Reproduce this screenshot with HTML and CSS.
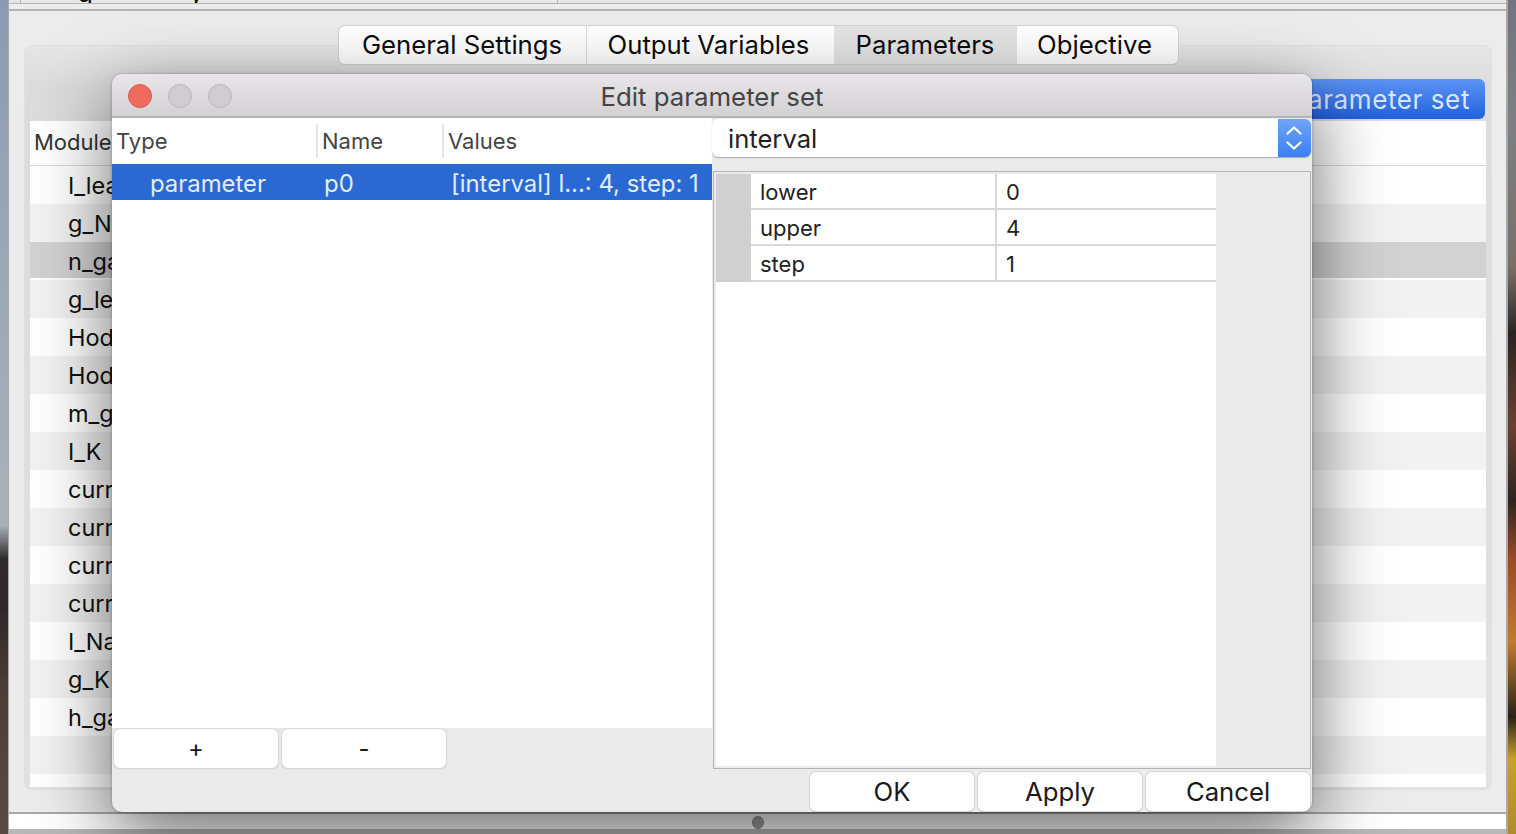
FILE: index.html
```html
<!DOCTYPE html>
<html lang="en">
<head>
  <meta charset="UTF-8">
  <title>Edit parameter set</title>
  <link rel="stylesheet" href="styles.css">
</head>
<body>
  <div class="wall wall-left"></div>

  <!-- Main window behind the dialog -->
  <div class="window">
    <div class="top-strip">
      <div class="top-tab"><span class="desc desc-g">g</span><span class="desc desc-y">y</span></div>
    </div>
    <div class="top-line"></div>

    <div class="main">
      <div class="tabs">
        <div class="tab tab-general">General Settings</div>
        <div class="tab tab-output">Output Variables</div>
        <div class="tab tab-active">Parameters</div>
        <div class="tab tab-objective">Objective</div>
      </div>
      <div class="panel">
        <div class="panel-actions">
          <button class="add-set">Add parameter set</button>
        </div>
        <div class="module-table">
          <div class="module-head">Module</div>
          <div class="module-row">I_leak</div>
          <div class="module-row alt">g_Na</div>
          <div class="module-row selected">n_gate</div>
          <div class="module-row alt">g_leak</div>
          <div class="module-row">Hodgkin</div>
          <div class="module-row alt">Hodgkin</div>
          <div class="module-row">m_gate</div>
          <div class="module-row alt">I_K</div>
          <div class="module-row">current</div>
          <div class="module-row alt">current</div>
          <div class="module-row">current</div>
          <div class="module-row alt">current</div>
          <div class="module-row">I_Na</div>
          <div class="module-row alt">g_K</div>
          <div class="module-row">h_gate</div>
          <div class="module-row alt"></div>
          <div class="module-end"></div>
        </div>
      </div>
    </div>

    <div class="status-bar"></div>
    <div class="status-under"><span class="handle"></span></div>
  </div>

  <div class="wall wall-right"></div>

  <!-- Dialog -->
  <div class="dialog">
    <div class="titlebar">
      <span class="light light-close"></span>
      <span class="light"></span>
      <span class="light"></span>
      <span class="title">Edit parameter set</span>
    </div>
    <div class="dialog-body">
      <div class="left-col">
        <div class="tree">
          <div class="tree-head">
            <div class="th th-type">Type</div>
            <div class="th th-name">Name</div>
            <div class="th th-values">Values</div>
          </div>
          <div class="tree-row">
            <div class="td td-type">parameter</div>
            <div class="td td-name">p0</div>
            <div class="td td-values">[interval] l...: 4, step: 1</div>
          </div>
        </div>
        <div class="tree-buttons">
          <button class="btn btn-small">+</button>
          <button class="btn btn-small">-</button>
        </div>
      </div>
      <div class="right-col">
        <div class="combo">
          <span class="combo-text">interval</span>
          <span class="stepper">
            <svg width="16" height="30" viewBox="0 0 16 30" fill="none" stroke="#fff" stroke-width="2.2" stroke-linecap="round" stroke-linejoin="round">
              <path d="M1.5 10.5 8 4.5l6.5 6"/>
              <path d="M1.5 19.5 8 25.5l6.5-6"/>
            </svg>
          </span>
        </div>
        <div class="values-frame">
          <div class="values-table">
            <div class="values-row"><div class="vh"></div><div class="vk">lower</div><div class="vv">0</div></div>
            <div class="values-row"><div class="vh"></div><div class="vk">upper</div><div class="vv">4</div></div>
            <div class="values-row"><div class="vh"></div><div class="vk">step</div><div class="vv">1</div></div>
          </div>
        </div>
        <div class="dialog-buttons">
          <button class="btn">OK</button>
          <button class="btn">Apply</button>
          <button class="btn">Cancel</button>
        </div>
      </div>
    </div>
  </div>
</body>
</html>
```

FILE: styles.css
```css
/* Page */
html, body {
  height: 100%;
}

body {
  margin: 0;
  height: 834px;
  display: flex;
  overflow: hidden;
  font-family: "Inter", "Liberation Sans", sans-serif;
  color: #111;
  position: relative;
}

/* Desktop wallpaper either side of the window */
.wall {
  width: 8px;
  flex: none;
}

.wall-left {
  background: linear-gradient(180deg, #8a9cb2 0%, #a3aeb8 50%, #aab1b6 63%, #2f2a2c 67%, #2c2628 72%, #4a3c36 82%, #5a4a42 100%);
}

.wall-right {
  background: linear-gradient(180deg, #6f7680 0%, #7d7f84 15%, #7a6f66 32%, #2a2420 40%, #6a4030 51%, #2c2620 60%, #9a4a28 67%, #c07a30 77%, #2a2218 86%, #c8a030 91%, #b08a2c 100%);
}

/* Main window */
.window {
  flex: 1;
  display: flex;
  flex-direction: column;
  background: #ececec;
  border-left: 1px solid #a8a8a8;
  border-right: 2px solid #a8a8a8;
  min-width: 0;
}

.top-strip {
  height: 3px;
  background: #e6e6e6;
  border-bottom: 1px solid #b4b4b4;
  padding-left: 11px;
  flex: none;
}

.top-tab {
  width: 536px;
  height: 3px;
  background: #e8e8e8;
  border-left: 1px solid #b4b4b4;
  border-right: 1px solid #b4b4b4;
  overflow: hidden;
  display: flex;
  font-size: 26px;
  line-height: 3px;
}

.desc {
  display: block;
  margin-top: -9px;
}

.desc-g {
  margin-left: 56px;
}

.desc-y {
  margin-left: 96px;
}

.top-line {
  height: 2px;
  margin-top: 5px;
  background: #b2b2b2;
  flex: none;
}

.main {
  flex: 1;
  padding: 15px 14px 22px 15px;
  display: flex;
  flex-direction: column;
  position: relative;
  min-height: 0;
}

/* Tabs */
.tabs {
  align-self: center;
  display: flex;
  height: 38px;
  background: #fff;
  border-radius: 6px;
  box-shadow: 0 0 0 1px #d4d4d4, 0 1px 1px #b8b8b8;
  position: relative;
  z-index: 1;
  overflow: hidden;
  font-size: 25.7px;
  flex: none;
}

.tab {
  display: flex;
  align-items: center;
  justify-content: center;
  line-height: 38px;
  color: #0c0c0c;
  box-sizing: border-box;
}

.tab-general {
  width: 248px;
  border-right: 1px solid #dcdcdc;
}

.tab-output {
  width: 247px;
  padding-right: 3px;
}

.tab-active {
  width: 183px;
  background: #e4e4e4;
}

.tab-objective {
  width: 161px;
  padding-right: 5px;
}

/* Panel behind the dialog */
.panel {
  flex: 1;
  margin-top: -19px;
  padding: 33px 5px 2px;
  background: linear-gradient(180deg, #e6e6e6 0, #dcdcdc 40px, #dcdcdc 60px, #e2e2e2 100%);
  border: 1px solid #e0e0e0;
  border-radius: 8px;
  display: flex;
  flex-direction: column;
  min-height: 0;
}

.panel-actions {
  display: flex;
  justify-content: flex-end;
  padding-right: 1px;
  flex: none;
}

.add-set {
  height: 40px;
  width: 260px;
  padding: 0 15px 0 0;
  border: none;
  border-radius: 6px;
  background: linear-gradient(180deg, #5c94f4, #2161dc);
  color: #dbe6fb;
  font-family: inherit;
  font-size: 26px;
  letter-spacing: 0.6px;
  text-align: right;
  white-space: nowrap;
}

.module-table {
  margin-top: 2px;
  flex: 1;
  display: flex;
  flex-direction: column;
  background: #fff;
  min-height: 0;
}

.module-head {
  height: 44px;
  line-height: 42px;
  padding-left: 4px;
  background: #fff;
  border-bottom: 1px solid #d8d8d8;
  font-size: 22px;
  color: #333;
  flex: none;
}

.module-row {
  height: 38px;
  line-height: 40px;
  padding-left: 38px;
  background: #fff;
  font-size: 23.5px;
  flex: none;
}

.module-row.alt {
  background: #f2f2f2;
}

.module-row.selected {
  height: 36px;
  margin-bottom: 2px;
  background: #d2d2d2;
}

.module-end {
  flex: 1;
  background: #fff;
}

/* Bottom bars of the main window */
.status-bar {
  height: 15px;
  background: #fff;
  border-top: 2px solid #a8a8a8;
  flex: none;
}

.status-under {
  height: 5px;
  background: #b8b8b8;
  flex: none;
  position: relative;
}

.handle {
  position: absolute;
  left: 743px;
  top: -13px;
  width: 10px;
  height: 11px;
  border-radius: 50%;
  background: #a0a0a0;
  border: 1px solid #8c8c8c;
}

/* Dialog */
.dialog {
  position: absolute;
  left: 112px;
  top: 74px;
  width: 1200px;
  height: 738px;
  display: flex;
  flex-direction: column;
  background: #ebebeb;
  border-radius: 10px;
  box-shadow: 0 24px 76px rgba(0, 0, 0, 0.58), 0 0 3px rgba(0, 0, 0, 0.3);
  overflow: hidden;
  z-index: 5;
}

.titlebar {
  height: 44px;
  position: relative;
  flex: none;
  display: flex;
  align-items: center;
  gap: 16px;
  padding-left: 16px;
  padding-top: 2px;
  box-sizing: border-box;
  background: linear-gradient(180deg, #e8e6e8, #d3d1d3);
  border-bottom: 2px solid #b4b4b4;
}

.light {
  width: 22px;
  height: 22px;
  border-radius: 50%;
  background: #cfcdcf;
  border: 1px solid #b8b6b8;
}

.light-close {
  background: #ee6a5f;
  border-color: #d8564c;
}

.title {
  position: absolute;
  left: 0;
  right: 0;
  top: 7px;
  text-align: center;
  font-size: 25.8px;
  line-height: 32px;
  color: #444;
}

.dialog-body {
  flex: 1;
  display: flex;
  min-height: 0;
}

/* Left column: tree and +/- buttons */
.left-col {
  width: 600px;
  flex: none;
  display: flex;
  flex-direction: column;
}

.tree {
  height: 610px;
  background: #fff;
  flex: none;
}

.tree-head {
  display: flex;
  height: 46px;
  align-items: center;
  font-size: 22px;
  color: #444;
}

.th {
  height: 34px;
  line-height: 34px;
  box-sizing: border-box;
}

.th-type {
  width: 206px;
  padding-left: 4px;
  border-right: 2px solid #e6e6e6;
}

.th-name {
  width: 126px;
  padding-left: 4px;
  border-right: 2px solid #e6e6e6;
}

.th-values {
  flex: 1;
  padding-left: 4px;
}

.tree-row {
  display: flex;
  height: 36px;
  background: #2a69d2;
  color: #e3ecfa;
  font-size: 23.9px;
  line-height: 40px;
}

.td {
  box-sizing: border-box;
  white-space: nowrap;
}

.td-type {
  width: 206px;
  padding-left: 38px;
}

.td-name {
  width: 126px;
  padding-left: 6px;
}

.td-values {
  flex: 1;
  padding-left: 7px;
}

.tree-buttons {
  display: flex;
  gap: 4px;
  padding: 1px 0 0 2px;
}

/* Buttons */
.btn {
  height: 39px;
  width: 164px;
  padding: 0;
  border: none;
  border-radius: 6px;
  background: #fff;
  box-shadow: 0 0 0 1px #d6d6d6, 0 1px 1px #b0b0b0;
  font-family: inherit;
  font-size: 25.7px;
  color: #1a1a1a;
}

.btn-small {
  font-size: 24px;
}

/* Right column: combo, values table, dialog buttons */
.right-col {
  flex: 1;
  display: flex;
  flex-direction: column;
  min-width: 0;
}

.combo {
  margin: 1px 1px 0 0;
  height: 38px;
  flex: none;
  display: flex;
  justify-content: space-between;
  background: #fff;
  border-radius: 6px;
  box-shadow: 0 1px 1px #a8a8a8;
  overflow: hidden;
}

.combo-text {
  padding-left: 16px;
  font-size: 25.6px;
  line-height: 40px;
  color: #222;
}

.stepper {
  width: 33px;
  padding-right: 2px;
  box-sizing: border-box;
  display: flex;
  align-items: center;
  justify-content: center;
  background: linear-gradient(180deg, #6fa5f6, #3b7ff2);
}

.values-frame {
  margin: 14px 1px 0 1px;
  flex: 1;
  background: #ebebeb;
  border: 1px solid #b4b4b4;
  padding: 2px;
  min-height: 0;
}

.values-table {
  width: 500px;
  height: 100%;
  background: #fff;
}

.values-row {
  display: flex;
  height: 36px;
  font-size: 22px;
  color: #222;
}

.vh {
  width: 35px;
  background: #d0d0d0;
  flex: none;
}

.vk {
  width: 246px;
  box-sizing: border-box;
  padding-left: 9px;
  line-height: 37px;
  border-right: 2px solid #d8d8d8;
  border-bottom: 2px solid #d8d8d8;
  flex: none;
}

.vv {
  flex: 1;
  padding-left: 9px;
  line-height: 37px;
  border-bottom: 2px solid #d8d8d8;
}

.dialog-buttons {
  display: flex;
  justify-content: flex-end;
  gap: 4px;
  padding: 3px 2px 1px 0;
  flex: none;
}
```
